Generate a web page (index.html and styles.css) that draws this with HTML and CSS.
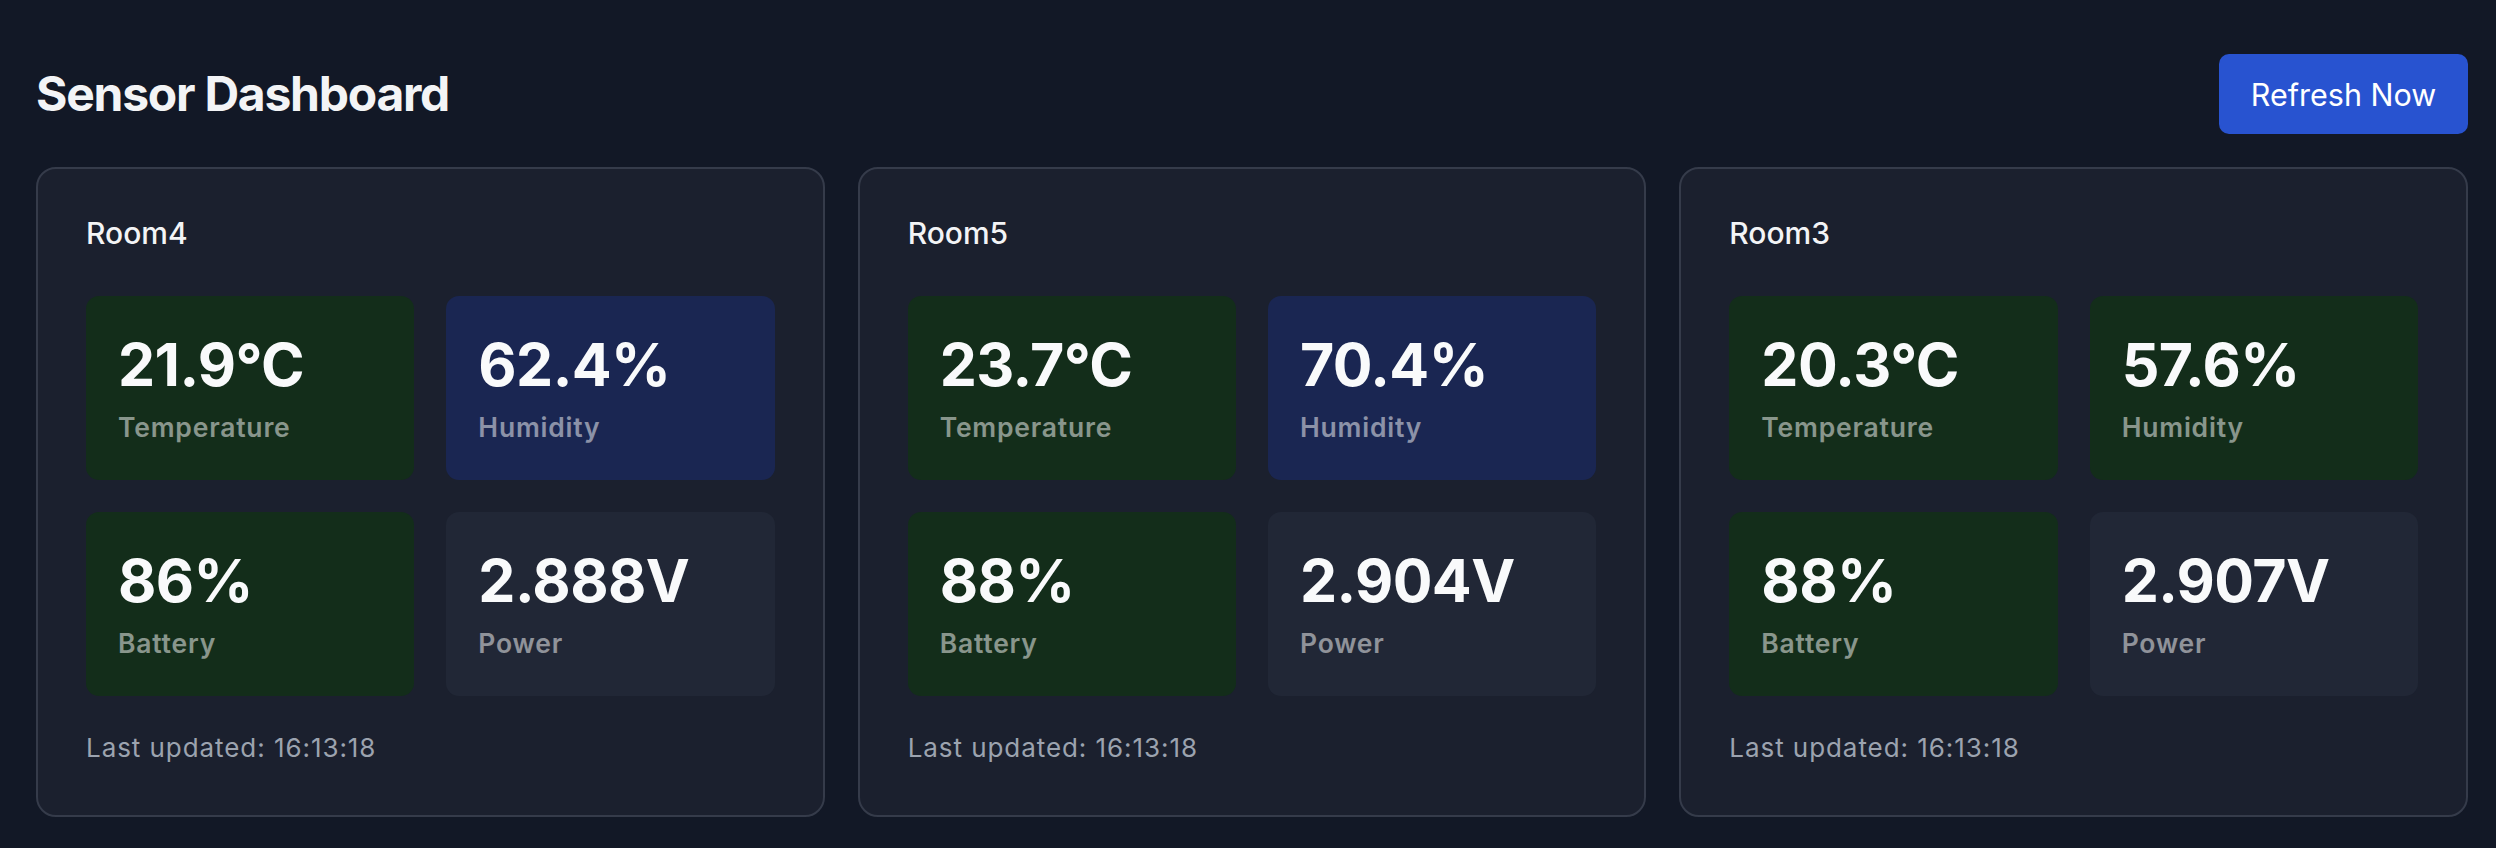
FILE: index.html
```html
<!DOCTYPE html>
<html lang="en">
<head>
<meta charset="utf-8">
<title>Sensor Dashboard</title>
<link rel="stylesheet" href="styles.css">
</head>
<body>
<div class="page">
  <header class="header">
    <h1 class="title">Sensor Dashboard</h1>
    <button class="refresh">Refresh Now</button>
  </header>
  <main class="rooms">
    <section class="card">
      <h2 class="room-name">Room4</h2>
      <div class="tiles">
        <div class="tile tile-green"><div class="value">21.9°C</div><div class="label">Temperature</div></div>
        <div class="tile tile-blue"><div class="value">62.4%</div><div class="label">Humidity</div></div>
        <div class="tile tile-green"><div class="value">86%</div><div class="label">Battery</div></div>
        <div class="tile tile-gray"><div class="value">2.888V</div><div class="label">Power</div></div>
      </div>
      <p class="updated">Last updated: 16:13:18</p>
    </section>
    <section class="card">
      <h2 class="room-name">Room5</h2>
      <div class="tiles">
        <div class="tile tile-green"><div class="value">23.7°C</div><div class="label">Temperature</div></div>
        <div class="tile tile-blue"><div class="value">70.4%</div><div class="label">Humidity</div></div>
        <div class="tile tile-green"><div class="value">88%</div><div class="label">Battery</div></div>
        <div class="tile tile-gray"><div class="value">2.904V</div><div class="label">Power</div></div>
      </div>
      <p class="updated">Last updated: 16:13:18</p>
    </section>
    <section class="card">
      <h2 class="room-name">Room3</h2>
      <div class="tiles">
        <div class="tile tile-green"><div class="value">20.3°C</div><div class="label">Temperature</div></div>
        <div class="tile tile-green"><div class="value">57.6%</div><div class="label">Humidity</div></div>
        <div class="tile tile-green"><div class="value">88%</div><div class="label">Battery</div></div>
        <div class="tile tile-gray"><div class="value">2.907V</div><div class="label">Power</div></div>
      </div>
      <p class="updated">Last updated: 16:13:18</p>
    </section>
  </main>
</div>
</body>
</html>
```

FILE: styles.css
```css
* { box-sizing: border-box; }

html, body {
  margin: 0;
  padding: 0;
  background: #121826;
}

body {
  font-family: Inter, "Noto Sans", "Liberation Sans", sans-serif;
  color: #f3f4f6;
  height: 848px;
  overflow: hidden;
}

.page {
  padding: 54px 28px 0 36px;
}

.header {
  display: flex;
  align-items: center;
  justify-content: space-between;
  height: 80px;
}

.title {
  margin: 0;
  font-size: 48px;
  line-height: 56px;
  font-weight: 700;
  letter-spacing: -0.026em;
  color: #f3f4f6;
}

.refresh {
  height: 80px;
  width: 249px;
  padding: 0;
  border: none;
  border-radius: 10px;
  background: #2853d0;
  color: #ffffff;
  font-family: inherit;
  font-size: 30.5px;
  font-weight: 400;
  letter-spacing: 0;
  display: flex;
  align-items: center;
  justify-content: center;
}

.rooms {
  margin-top: 33px;
  display: grid;
  grid-template-columns: repeat(3, 1fr);
  gap: 33px;
}

.card {
  background: #1b202e;
  border: 2px solid #353b4a;
  border-radius: 20px;
  padding: 48px;
}

.room-name {
  margin: 0 0 47px;
  font-size: 30px;
  line-height: 32px;
  font-weight: 500;
  color: #f3f4f6;
}

.tiles {
  display: grid;
  grid-template-columns: 1fr 1fr;
  gap: 32px;
}

.tile {
  border-radius: 13px;
  padding: 37px 32px 34px;
  height: 184px;
}

.tile-green { background: #132d1a; }
.tile-blue { background: #1a2652; }
.tile-gray { background: #212736; }

.value {
  font-size: 59px;
  line-height: 64px;
  font-weight: 700;
  letter-spacing: -0.01em;
  color: #f9fafb;
}

.label {
  margin-top: 11px;
  font-size: 26.5px;
  line-height: 38px;
  font-weight: 600;
  letter-spacing: 0.03em;
  color: rgba(255, 255, 255, 0.5);
}

.updated {
  margin: 33px 0 0;
  font-size: 26px;
  line-height: 38px;
  font-weight: 400;
  letter-spacing: 0.036em;
  color: #9ca3af;
}
```
